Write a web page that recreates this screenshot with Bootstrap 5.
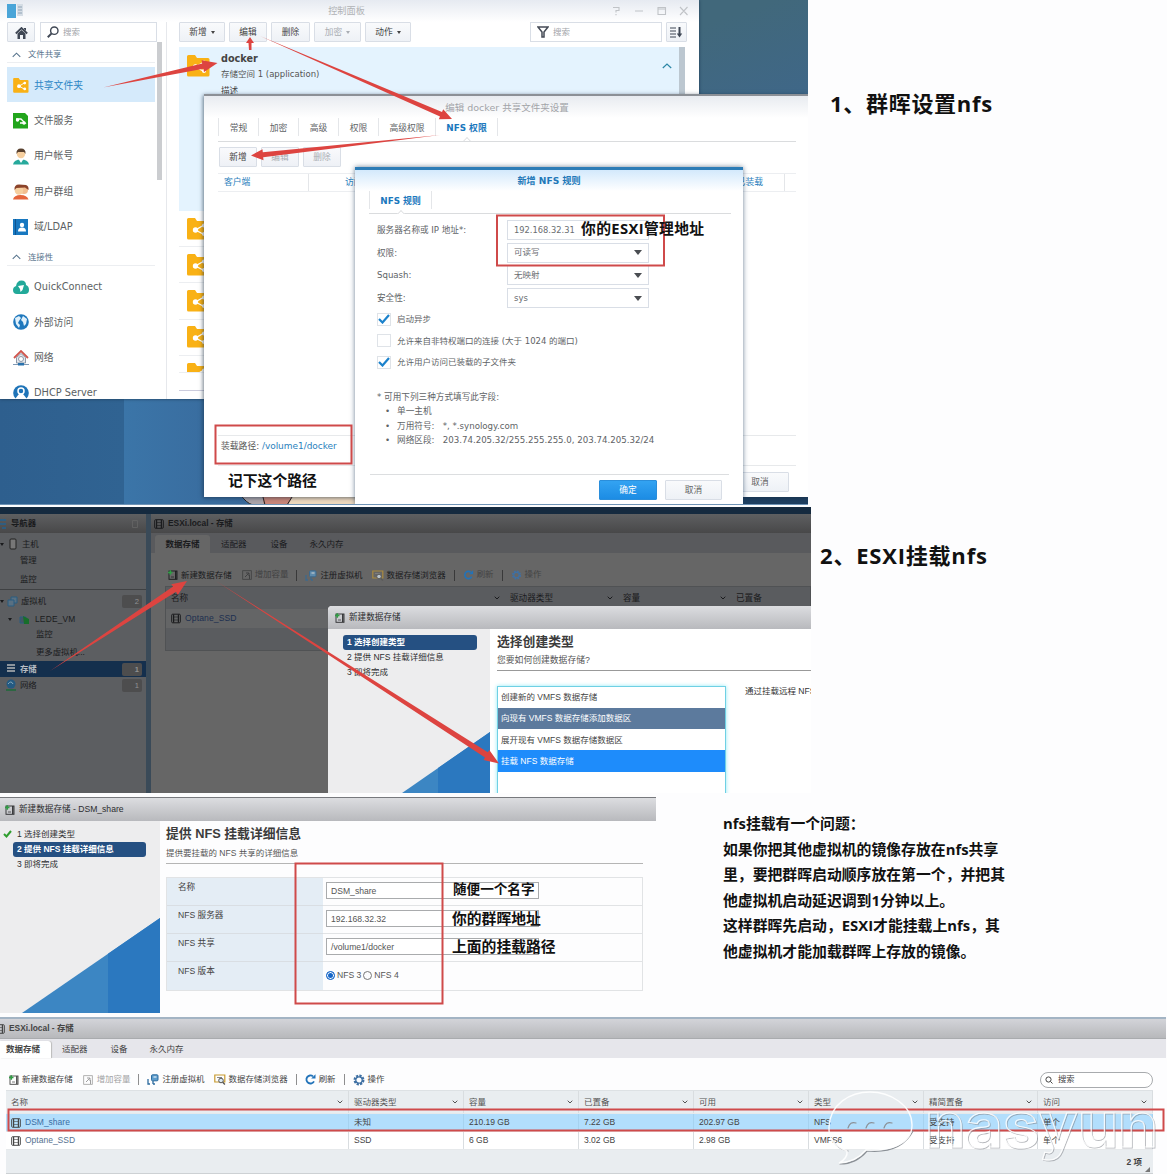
<!DOCTYPE html>
<html lang="zh-CN">
<head>
<meta charset="utf-8">
<meta name="viewport" content="width=device-width, initial-scale=1">
<title>NFS 设置</title>
<link href="https://cdn.jsdelivr.net/npm/bootstrap@5.3.0/dist/css/bootstrap.min.css" rel="stylesheet">
<script src="https://cdn.jsdelivr.net/npm/bootstrap@5.3.0/dist/js/bootstrap.bundle.min.js"></script>
<style>
body{width:1167px;height:1174px;overflow:hidden;background:#fdfdfe;line-height:1;color:#555}
svg{display:block;flex:none}
.syn{font-family:"DejaVu Sans","Noto Sans CJK SC",sans-serif;font-size:8.6px;white-space:nowrap}
.esx{font-family:"Liberation Sans","Noto Sans CJK SC",sans-serif;font-size:8.6px;white-space:nowrap}
.page{width:1167px;height:1174px}
/* section heights */
.sec-a{height:507px}.sec-b{height:290px}.sec-c{height:220px}.sec-d{height:157px}
.desk{width:808px;height:505px;overflow:hidden;background:linear-gradient(90deg,#2e5f8e 0,#306392 124px,#3b75a8 124px,#38689a 260px,#1f4264 700px,#1f3f60);flex:none}
.desk-top{left:699px;top:0;width:109px;height:95px;background:linear-gradient(160deg,#41687b 20%,#3f6788)}
.desk-line{left:0;top:504px;width:808px;height:3px;background:linear-gradient(#5f87ad,#bcd0e2)}
/* control panel */
.cp{left:0;top:0;width:699px;height:399px;background:#fff;box-shadow:0 0 3px #1d3a55;overflow:hidden}
.cp-title{height:22px;background:linear-gradient(#e6eaf1,#fff);color:#b0b2b5;font-size:9.2px;padding-left:7px}
.cp-side{width:167px;height:377px;border-right:1px solid #e6e8ec}
.sbtn{height:20px;border:1px solid #d9dee6;background:linear-gradient(#f9fafc,#eef1f6);border-radius:1px;color:#444;display:flex;align-items:center;justify-content:center;padding:1px 0 0;font-size:8.7px}
.sbtn.off{color:#a9adb3}
.sinp{height:20px;border:1px solid #d9dee6;background:#fff;display:flex;align-items:center;color:#a2a5aa;font-size:8.5px}
.grp{height:21px;color:#56738c;font-size:8.4px;border-bottom:1px solid #eceef1;margin:0 11px 0 7px;padding:5px 0 0 5px;gap:7px}
.sitem{height:35.3px;font-size:9.8px;color:#5c5f63;padding:2px 0 0 6px;gap:5px;margin-left:7px;width:148px}
.sitem.on{background:#d5eafb;color:#2b86c5}
.cp-scroll{left:157px;top:42px;width:5px;height:138px;background:#cbcdd0}
.cp-list{width:506px;margin-left:12px}
.cp-sel{height:164px;background:#e4f3fe;padding:6px 0 0 8px}
.frow{height:36.2px;border-bottom:1px solid #eceef1;padding-left:8px}
/* shared folder dialog */
.dlg{left:204px;top:94px;width:604px;height:403px;background:#fff;border-top:2px solid #8c9096;box-shadow:-1px 1px 4px rgba(20,40,60,.6)}
.dlg-title{height:22px;background:linear-gradient(#e8ebf0,#fff);color:#a2a4a8;font-size:9.5px;padding:2px 38px 0 40px}
.tabsrow{margin:0 12px 0 14px;height:24px;border-bottom:1px solid #dadcde;align-items:flex-start}
.stab{height:18px;border-right:1px solid #e4e6e9;display:flex;align-items:center;justify-content:center;font-size:8.8px;color:#606366;padding-top:2px}
.stab.on{color:#1a78bd;font-weight:700;position:relative}
.stab.on::after{content:"";position:absolute;left:50%;top:20px;width:6px;height:6px;margin-left:-3px;background:#fff;border:solid #dadcde;border-width:1px 0 0 1px;transform:rotate(45deg);clip-path:polygon(0 0,100% 0,0 100%)}
.thead-s{margin:6px 12px 0 14px;height:19px;border:solid #eceef1;border-width:1px 0;color:#2b7fbd;font-size:8.8px}
.nfs{left:355px;top:167px;width:388px;height:338px;background:#fff;border-top:3px solid #2c7cb6;box-shadow:0 0 5px rgba(30,60,90,.65)}
.nfs-title{height:21px;background:linear-gradient(#d3e9fc,#fff);color:#2278b8;font-weight:700;font-size:9.1px;padding-top:2px}
.frm{padding:6px 0 0 22px}
.frmrow{height:22.7px}
.frmrow>span{width:130px;color:#606366;padding-top:6px}
.frmrow .sinp{width:142px;padding:0 6px;color:#6a6d71;justify-content:space-between}
.tri{width:0;height:0;border:4px solid transparent;border-top:5px solid #4a4d52;border-bottom:0}
.trs{width:0;height:0;border:2.5px solid transparent;border-top:3px solid currentColor;border-bottom:0;margin-left:4px}
.chk{height:21.4px;color:#606366;gap:6px;font-size:8.5px;position:relative}
.cbox{width:14px;height:13px;border:1px solid #dfe3e8;display:flex;align-items:center;justify-content:center}
.hint{margin-top:20px;color:#606366;font-size:8.65px}
.hint div{height:14.3px}
.bul{padding-left:8px}
.bul::before{content:"•";margin-right:7px}
.okbtn{background:linear-gradient(#33a3f2,#1c8ce4);border-color:#2a8edb;color:#fff}
/* dimmed host client */
.host{width:811px;height:286px;overflow:hidden;background:#3a4a58;border-top:7px solid #152a3f;color:#1a1b1d;flex:none}
.hbar{height:19px;background:linear-gradient(#5e5f61,#484849);font-weight:700;font-size:8.4px}
.nav-h{width:146px;height:280px;background:#5c5e61}
.nrow{font-size:8.4px;padding-right:4px}
.cnt{width:20px;height:13px;background:#4d4d4e;color:#8f9092;border-radius:2px;margin-left:auto;text-align:right;padding:3px 3px 0 0;font-size:7.6px}
.pane{width:661px;height:280px;background:#666;margin-left:5px}
.tabs-h{height:20px;background:#595a5d;padding-left:4px;font-size:8.5px}
.tab-h{width:55px;height:18px;background:#666;border-radius:3px 3px 0 0;font-weight:700;align-self:flex-end}
.grid-h{margin-left:14px;height:65px;background:#5a5c5f;border:1px solid #505254}
.tools{gap:3px;font-size:8.45px}
.tools>.vsep{margin:0 5px}
.tools>.brw{margin-left:6px}
.wiz{left:328px;top:92px;width:483px;height:194px;background:#fff;border-radius:4px 0 0 0;color:#333;overflow:hidden}
.wbar{height:23px;background:linear-gradient(#dcdde0,#b8b9bd);color:#2c2d2f;font-size:8.6px}
.wside{background:#ededee;flex:none}
.step{height:15px;font-size:8.5px;padding-left:4px;border-radius:3px;color:#2d2e30}
.step.on{background:#255082;color:#fff;font-weight:700}
.wh{font-size:12.8px;font-weight:600;color:#3c3c3c}
.opt{height:21.3px;padding-left:3px;font-size:8.5px;color:#444}
.optbox{width:229px;height:120px;border:1px solid #6fd0e4;box-shadow:0 0 4px #8feaf5;margin-top:15px}
.wiz2{width:656px;height:216px;flex:none;border-top:1px solid #77797d}
.fcell{height:28px;border-bottom:1px solid #d9dee3;padding:5px 0 0 11px;font-size:8.6px;color:#444}
.vcell{height:28px;border-bottom:1px solid #e1e3e5;padding-left:3px}
.tin{width:213px;height:17px;border:1px solid #a9abad;background:#fff;padding-left:4px;display:flex;align-items:center;color:#555;font-size:8.6px}
.rad{width:9px;height:9px;border:1px solid #777;border-radius:50%;display:inline-block}
.rad.on{border:1px solid #1767c8;background:#1767c8;box-shadow:inset 0 0 0 1px #fff}
/* final datastore list */
.ds{width:1166px;border-top:2px solid #a3b4c4;background:#fdfdfe;color:#444;height:157px}
.ds-bar{height:20px;background:linear-gradient(#d3d4d9,#b7b8bb);font-weight:700;font-size:8.4px;border-bottom:1px solid #a9abae}
.ds-tabs{height:19px;background:#e6e6eb;font-size:8.5px}
.ds-tab{width:51px;height:17px;background:#fff;border-radius:0 3px 0 0;align-self:flex-end;font-weight:700;box-shadow:1px 0 1px #bbb}
.dgrid{margin-left:6px;width:1147px;background:#e9edf0;font-size:8.5px;border-top:1px solid #dde1e4;border-bottom:1px solid #cdd1d4}
.drow{display:grid;grid-template-columns:343px 115px 115px 115px 115px 115px 114px 115px;height:18px;background:#fff;border-bottom:1px solid #e6e9eb}
.drow>div{border-right:1px solid #d9dde0;display:flex;align-items:center;padding:0 5px;gap:4px}
.drow.hd{height:23px;background:#e9edf0}
.drow.hd>div{justify-content:space-between;color:#555}
.drow.pick{background:#b2defc}
.drow.pick>div{border-color:#a6d2ef}
.pill{width:113px;height:16px;border:1px solid #a8abae;border-radius:8px;background:#fff;font-size:8.3px;padding-left:4px;gap:5px;margin-left:auto;margin-right:13px}
.vsep{width:1px;height:11px;background:currentColor;opacity:.6}
/* annotations */
.ann{font-family:"Open Sans","Noto Sans CJK SC",sans-serif;font-weight:700;color:#111;white-space:nowrap;position:absolute}
.note{font-family:"Open Sans","Noto Sans CJK SC",sans-serif;font-weight:700;color:#111;white-space:nowrap}
.n1{font-size:22px;letter-spacing:.7px;padding:92px 0 0 22px}
.n2{font-size:22px;letter-spacing:.8px;padding:37px 0 0 9px}
.n3{font-size:14.85px;line-height:25.5px;padding:14px 0 0 67px}
.a1{left:228px;top:473px;font-size:14.8px}
.a2{left:581px;top:221px;font-size:14.8px;letter-spacing:.35px}
.a3{left:453px;top:882px;font-size:13.6px}
.a4{left:452px;top:911px;font-size:14.8px}
.a5{left:452px;top:939px;font-size:14.8px}
.over{left:0;top:0;pointer-events:none}
</style>
</head>
<body>
<svg width="0" height="0" class="position-absolute">
<defs>
<symbol id="fold" viewBox="0 0 23 22"><path d="M0 1.500Q0 0 1.500 0H8l2 3h11q1.500 0 1.500 1.500V20q0 1.500-1.500 1.500H1.500Q0 21.500 0 20Z" fill="#f9b115"/><path d="M17 7 8.500 12 17 16.500" stroke="#fff" stroke-width="1.300" fill="none"/><circle cx="8.500" cy="12" r="2.700" fill="#fff"/><circle cx="17" cy="7.500" r="2" fill="#fff"/><circle cx="17" cy="16" r="2" fill="#fff"/></symbol>
<symbol id="db" viewBox="0 0 10 10"><rect x=".7" y=".7" width="8.600" height="8.600" rx="1" fill="none" stroke="currentColor" stroke-width="1"/><path d="M2.600 1v8M7.400 1v8" stroke="currentColor" stroke-width="1.200"/><path d="M3 3.500h4M3 6.500h4" stroke="currentColor" stroke-width=".6"/></symbol>
<symbol id="dbn" viewBox="0 0 10 10"><rect x="1" y="1" width="8" height="8.300" fill="none" stroke="currentColor" stroke-width=".9"/><path d="M7.800 1v8" stroke="currentColor" stroke-width="1.400"/><path d="M0 2.500h4.500M2.300 .3v4.400" stroke="#2f9e44" stroke-width="1.500"/><path d="M3 7h3" stroke="currentColor" stroke-width=".7"/></symbol>
<symbol id="grow" viewBox="0 0 10 10"><rect x=".7" y=".7" width="8.600" height="8.600" fill="none" stroke="currentColor" stroke-width=".8"/><path d="M3 7l4-4M4 3h3v3M7.500 5v4" stroke="currentColor" stroke-width="1" fill="none"/></symbol>
<symbol id="reg" viewBox="0 0 12 11"><rect x="4.500" y=".8" width="6.500" height="6" rx="1" fill="#5c9ccc" stroke="#2d6b9e"/><path d="M1 5v5h2M6 10V7M8 10h-2" stroke="#2d6b9e" stroke-width="1.300" fill="none"/><path d="M6.500 3h3" stroke="#fff"/></symbol>
<symbol id="brw" viewBox="0 0 12 11"><path d="M.8 1h10v7h-10z" fill="none" stroke="#c79a2e" stroke-width="1.200"/><path d="M3 3.500h5" stroke="#888"/><circle cx="7" cy="6.500" r="2.300" fill="#dce9f3" stroke="#555"/><path d="M8.700 8.200l2.200 2.300" stroke="#555" stroke-width="1.300"/></symbol>
<symbol id="ref" viewBox="0 0 11 11"><path d="M9 7.300A4 4 0 1 1 8 2.400" fill="none" stroke="#2273b9" stroke-width="1.800"/><path d="M6.200 4.600h4.300V.3z" fill="#2273b9"/></symbol>
<symbol id="gear" viewBox="0 0 12 12"><circle cx="6" cy="6" r="4.300" fill="none" stroke="#3f70a3" stroke-width="2.300" stroke-dasharray="2.200 1.150"/><circle cx="6" cy="6" r="3.200" fill="none" stroke="#3f70a3" stroke-width="1.300"/></symbol>
<symbol id="chev" viewBox="0 0 6 4"><path d="M.7.7 3 3 5.300.7" fill="none" stroke="currentColor" stroke-width="1"/></symbol>
<symbol id="up" viewBox="0 0 10 6"><path d="M.8 5 5 1l4.200 4" fill="none" stroke="currentColor" stroke-width="1.200"/></symbol>
<symbol id="mag" viewBox="0 0 12 12"><circle cx="7.300" cy="4.700" r="3.700" fill="none" stroke="currentColor" stroke-width="1.400"/><path d="M4.600 7.400.8 11.200" stroke="currentColor" stroke-width="2"/></symbol>
</defs>
</svg>
<main class="page position-relative d-flex flex-column">

<section class="sec-a d-flex">
<div class="desk syn position-relative">
 <div class="desk-top position-absolute"></div>
 <svg class="position-absolute" style="left:238px;top:494px" width="120" height="11"><path d="M2 0Q8 9 15 11H118V0Z" fill="#eed8bd"/><path d="M2 0Q8 9 15 11H26V0Z" fill="#aaa3a8"/><path d="M24 0l2 11h24l6-11z" fill="#c98679"/><path d="M2 0Q8 9 15 11M25 3l2 8M54 3l-5 8" stroke="#222" fill="none"/></svg>
 <div class="cp position-absolute">
  <div class="cp-title d-flex align-items-center">
   <svg width="17" height="15"><path d="M0 0h9v14H0z" fill="#4aa5d8"/><path d="M10 0h6v12h-6z" fill="#d5dde5"/><path d="M11 3h4M11 6h4M11 9h4" stroke="#8fa3b5"/></svg>
   <span class="mx-auto" style="padding-left:61px">控制面板</span>
   <svg style="margin-right:11px" width="80" height="10" fill="none" stroke="#c0c3c7" stroke-width="1.100"><path d="M5 1.500h6v3H8v2M8 8v1.200M27 5h8M50 1.500h7.500v7H50zM50 3h7.500M72 1l7.500 8M79.500 1 72 9"/></svg>
  </div>
  <div class="d-flex">
   <div class="cp-side">
    <div class="d-flex" style="padding-left:7px;gap:5px">
     <div class="sbtn" style="width:28px"><svg width="13" height="12"><path d="M.8 6.500 6.500 1l5.700 5.500" fill="none" stroke="#3f4754" stroke-width="1.800"/><path d="M2.500 6.500 6.500 3l4 3.500V12H8V8H5v4H2.500z" fill="#3f4754"/><path d="M9 1h2v3L9 2z" fill="#3f4754"/></svg></div>
     <div class="sinp" style="width:117px;padding-left:6px;gap:4px"><svg width="12" height="12" color="#3f4754"><use href="#mag"/></svg>搜索</div>
    </div>
    <div class="grp d-flex align-items-center"><svg width="9" height="6"><use href="#up"/></svg>文件共享</div>
    <div style="height:4px"></div>
    <div class="sitem on d-flex align-items-center"><svg width="16" height="15"><use href="#fold"/></svg>共享文件夹</div>
    <div class="sitem d-flex align-items-center"><svg width="16" height="16"><path d="M0 0h12l3 3v12.500H0z" fill="#22a51c"/><path d="M3 6h5l4 4H7" stroke="#fff" stroke-width="1.300" fill="none"/><circle cx="4.500" cy="7" r="1.700" fill="#fff"/><circle cx="11" cy="10" r="1.700" fill="#fff"/></svg>文件服务</div>
    <div class="sitem d-flex align-items-center"><svg width="16" height="17"><path d="M0 16.500q1-5 8-5t8 5z" fill="#27a99c"/><path d="M5.500 11h5L8 15z" fill="#fff"/><circle cx="8" cy="6" r="4.200" fill="#f6cf9f"/><path d="M3.500 6Q3 .5 8 .5T12.500 6L11 4H5z" fill="#58402e"/></svg>用户帐号</div>
    <div class="sitem d-flex align-items-center"><svg width="16" height="17"><path d="M0 16.500q1-4.500 7.500-4.500t8 4.500z" fill="#e5653c"/><circle cx="11" cy="7" r="4" fill="#f2bd8f"/><circle cx="6" cy="7.500" r="4.300" fill="#f6cf9f"/><path d="M1.500 7Q1 1.500 6 1.500L13 2q3 1 2.500 5L12 4.500 3.500 5z" fill="#8b432a"/></svg>用户群组</div>
    <div class="sitem d-flex align-items-center"><svg width="16" height="16"><path d="M0 0h15v16H0z" fill="#1878c0"/><path d="M2.500 0v16" stroke="#0e5490"/><circle cx="9" cy="6" r="2.200" fill="#fff"/><path d="M5 12.500q0-4 4-4t4 4z" fill="#fff"/></svg>域/LDAP</div>
    <div class="grp d-flex align-items-center" style="height:23px"><svg width="9" height="6"><use href="#up"/></svg>连接性</div>
    <div style="height:2px"></div>
    <div class="sitem d-flex align-items-center"><svg width="16" height="15"><path d="M4 14Q0 14 0 10q0-3 3-4 1-5.500 5.500-5.500T13 5q3 1 3 5 0 4-4 4z" fill="#22a999"/><path d="M5 6l6-1-1.500 5-2 2-.5-3z" fill="#fff"/></svg>QuickConnect</div>
    <div class="sitem d-flex align-items-center"><svg width="16" height="16"><circle cx="8" cy="8" r="7.800" fill="#1f78bd"/><path d="M2 4l4-2 2 2-2 3-1 2 2 2-1 3-3-4zM10 2l4 3-1 5-2 2-1-4-2-2z" fill="#dff0fb"/></svg>外部访问</div>
    <div class="sitem d-flex align-items-center"><svg width="16" height="16"><path d="M1 8l7-7 7 7" stroke="#d0564e" stroke-width="1.800" fill="none"/><path d="M3.500 7.500 8 3.500l4.500 4V13h-9z" fill="#e6e9ee" stroke="#8b98a8"/><circle cx="8" cy="9" r="2.500" fill="#fff" stroke="#8b98a8"/><path d="M0 14.500h16" stroke="#7f99b5"/><path d="M5 13h6v2.500H5z" fill="#2a72ad"/></svg>网络</div>
    <div class="sitem d-flex align-items-center"><svg width="16" height="16"><circle cx="8" cy="8" r="7.800" fill="#1f74b8"/><circle cx="8" cy="6" r="3" fill="none" stroke="#fff" stroke-width="1.500"/><path d="M2 14l4-5h4l4 5z" fill="#fff"/></svg>DHCP Server</div>
   </div>
   <div class="cp-scroll position-absolute"></div>
   <div class="cp-list">
    <div class="d-flex" style="gap:4px;height:25px;width:508px">
     <div class="sbtn" style="width:46px">新增<i class="trs"></i></div><div class="sbtn" style="width:38px">编辑</div><div class="sbtn" style="width:39px">删除</div><div class="sbtn off" style="width:47px">加密<i class="trs"></i></div><div class="sbtn" style="width:46px">动作<i class="trs"></i></div>
     <div class="sinp ms-auto" style="width:132px;padding-left:6px;gap:4px"><svg width="12" height="12"><path d="M1 1h10L7 6v5H5V6z" fill="none" stroke="#444a55" stroke-width="1.500"/></svg>搜索</div>
     <div class="sbtn" style="width:21px"><svg width="13" height="11"><path d="M0 1h6M0 4h6M0 7h6M0 10h6" stroke="#3f4754" stroke-width="1.200"/><path d="M9.500 0v8" stroke="#3f4754" stroke-width="2"/><path d="M6.800 6.500h5.400L9.500 10.500z" fill="#3f4754"/></svg></div>
    </div>
    <div class="cp-sel d-flex"><svg style="margin-top:2px" width="23" height="22"><use href="#fold"/></svg>
     <div style="padding:1px 0 0 11px"><b class="d-block" style="font-size:9.700px;color:#444">docker</b><div style="padding-top:6px;font-size:8.500px">存储空间 1 (application)</div><div style="padding-top:9px;color:#444">描述</div></div>
     <svg class="ms-auto" style="margin:10px 7px 0 0" width="10" height="6" color="#2b86a5"><use href="#up"/></svg><i style="width:6px;height:170px;margin-top:-6px;background:#bcc7d0"></i></div>
    <div class="frow d-flex align-items-center"><svg width="23" height="22"><use href="#fold"/></svg></div>
    <div class="frow d-flex align-items-center"><svg width="23" height="22"><use href="#fold"/></svg></div>
    <div class="frow d-flex align-items-center"><svg width="23" height="22"><use href="#fold"/></svg></div>
    <div class="frow d-flex align-items-center"><svg width="23" height="22"><use href="#fold"/></svg></div>
    <div class="frow overflow-hidden" style="height:17px;padding-top:7px"><svg width="23" height="22"><use href="#fold"/></svg></div>
    <div class="frow" style="height:18px;border-color:#ccd"></div>
   </div>
  </div>
 </div>

 <div class="dlg position-absolute">
  <div class="dlg-title d-flex align-items-center justify-content-center">编辑&nbsp;<span>docker</span>&nbsp;共享文件夹设置</div>
  <div class="tabsrow d-flex">
   <div class="stab" style="width:41px;border-left:1px solid #e4e6e9">常规</div><div class="stab" style="width:40px">加密</div><div class="stab" style="width:40px">高级</div><div class="stab" style="width:40px">权限</div><div class="stab" style="width:57px">高级权限</div><div class="stab on" style="width:62px">NFS 权限</div>
  </div>
  <div class="d-flex" style="padding:5px 0 0 15px;gap:4px"><div class="sbtn" style="width:38px">新增</div><div class="sbtn off" style="width:38px">编辑</div><div class="sbtn off" style="width:38px">删除</div></div>
  <div class="thead-s d-flex align-items-center"><span style="width:91px;padding-left:6px;border-right:1px solid #e4e6e9;line-height:17px">客户端</span><span style="padding-left:36px">访问</span><span class="ms-auto" style="line-height:17px;border-right:1px solid #e4e6e9;padding-right:21px;margin-right:11px">已装载</span></div>
  <div style="height:243px"></div>
  <div class="d-flex align-items-center" style="margin:0 12px 0 14px;height:31px;border:solid #e7e9eb;border-width:1px 0;padding:0 0 9px 3px;font-size:8.800px">装载路径:&nbsp;<span style="color:#2b7fbd;font-size:9px;letter-spacing:-.05px">/volume1/docker</span></div>
  <div class="sbtn ms-auto" style="width:58px;margin:6px 19px 0 0;color:#666">取消</div>
 </div>

 <div class="nfs position-absolute">
  <div class="nfs-title d-flex align-items-center justify-content-center">新增 NFS 规则</div>
  <div class="tabsrow d-flex" style="height:23px"><div class="stab on" style="width:63px;border-left:1px solid #e4e6e9">NFS 规则</div></div>
  <div class="frm">
   <div class="frmrow d-flex align-items-start"><span>服务器名称或 IP 地址*:</span><div class="sinp" style="font-size:8.300px">192.168.32.31</div></div>
   <div class="frmrow d-flex align-items-start"><span>权限:</span><div class="sinp">可读写<i class="tri"></i></div></div>
   <div class="frmrow d-flex align-items-start"><span>Squash:</span><div class="sinp">无映射<i class="tri"></i></div></div>
   <div class="frmrow d-flex align-items-start"><span>安全性:</span><div class="sinp">sys<i class="tri"></i></div></div>
   <div style="margin-top:-2px">
   <div class="chk d-flex align-items-center"><i class="cbox"><svg width="12" height="10"><path d="M1 5l3.500 3.500L11 1" stroke="#1b82cc" stroke-width="2.200" fill="none"/></svg></i>启动异步</div>
   <div class="chk d-flex align-items-center"><i class="cbox"></i><span>允许来自非特权端口的连接 (大于 1024 的端口)</span></div>
   <div class="chk d-flex align-items-center"><i class="cbox"><svg width="12" height="10"><path d="M1 5l3.500 3.500L11 1" stroke="#1b82cc" stroke-width="2.200" fill="none"/></svg></i>允许用户访问已装载的子文件夹</div>
   </div>
   <div class="hint"><div>* 可用下列三种方式填写此字段:</div><div class="bul">单一主机</div><div class="bul">万用符号:&nbsp; &nbsp;*, *.synology.com</div><div class="bul">网络区段:&nbsp; &nbsp;203.74.205.32/255.255.255.0, 203.74.205.32/24</div></div>
  </div>
  <div class="d-flex justify-content-end" style="margin:24px 14px 0 15px;border-top:1px solid #dcdee0;padding:5px 7px 0 0;gap:8px"><div class="sbtn okbtn" style="width:58px">确定</div><div class="sbtn" style="width:57px;color:#666">取消</div></div>
 </div>
 <div class="desk-line position-absolute"></div>
</div>
<div class="note n1">1、群晖设置nfs</div>
</section>

<section class="sec-b d-flex">
<div class="host esx position-relative d-flex">
 <div class="nav-h flex-shrink-0">
  <div class="hbar d-flex align-items-center" style="gap:4px"><svg width="7" height="10"><path d="M0 1h6M0 5h6M2 9h4" stroke="#24628f" stroke-width="1.500"/></svg>导航器<svg class="ms-auto me-2" width="6" height="8"><path d="M.5.5h5v7h-5z" fill="none" stroke="#666" stroke-width=".8"/></svg></div>
  <div class="nrow d-flex align-items-center" style="height:22px;gap:5px"><i class="trs m-0" style="margin-top:1px"></i><svg width="8" height="12"><rect x="1" y="1" width="6" height="10" rx="1" fill="#777" stroke="#222"/></svg>主机</div>
  <div class="nrow" style="height:18px;padding:1px 0 0 20px">管理</div>
  <div class="nrow" style="height:17px;padding:2px 0 0 20px;border-bottom:1px solid #3f4143">监控</div>
  <div class="nrow d-flex align-items-center" style="height:22px;gap:3px"><i class="trs m-0"></i><svg width="11" height="11"><path d="M1 4h6v6H1zM4 4V1h6v6H7" stroke="#2b5c80" fill="#597082"/></svg>虚拟机<span class="cnt">2</span></div>
  <div class="nrow d-flex align-items-center" style="height:14px;gap:7px;padding-left:8px"><i class="trs m-0"></i><svg width="11" height="11"><path d="M1 3h6v6H1z" stroke="#2b5c80" fill="#456"/><path d="M4 2l6 3v5H5z" fill="#176e2b"/></svg><span style="margin-left:-2px;letter-spacing:.2px">LEDE_VM</span></div>
  <div class="nrow" style="height:17px;padding:4px 0 0 36px">监控</div>
  <div class="nrow" style="height:18px;padding:5px 0 0 36px">更多虚拟机...</div>
  <div class="nrow d-flex align-items-center" style="height:16px;gap:5px;padding-left:7px;background:#142f4d;color:#b8bdc3;font-weight:700"><svg width="8" height="10"><path d="M0 1h8M0 4h8M0 7h8" stroke="#8c949c" stroke-width="2"/></svg>存储<span class="cnt">1</span></div>
  <div class="nrow d-flex align-items-center" style="height:16px;gap:3px;padding-left:5px"><svg width="12" height="12"><circle cx="6" cy="5" r="4.500" fill="#245a82"/><path d="M3 5q3-4 5 0" stroke="#8ab" fill="none"/><path d="M1 11h10" stroke="#1d6b38" stroke-width="1.500"/></svg>网络<span class="cnt">1</span></div>
 </div>
 <div class="pane">
  <div class="hbar d-flex align-items-center" style="padding-left:3px;gap:4px"><svg width="10" height="10"><use href="#db"/></svg><span>ESXi.local - 存储</span></div>
  <div class="tabs-h d-flex align-items-center"><div class="tab-h d-flex align-items-center justify-content-center">数据存储</div><span style="padding:2px 0 0 11px">适配器</span><span style="padding:2px 0 0 24px">设备</span><span style="padding:2px 0 0 22px">永久内存</span></div>
  <div class="tools d-flex align-items-center" style="height:33px;padding:11px 0 0 17px"><svg width="10" height="10"><use href="#dbn"/></svg>新建数据存储<span class="d-flex opacity-50" style="gap:3px;margin-left:7px"><svg width="10" height="10"><use href="#grow"/></svg>增加容量</span><i class="vsep"></i><svg width="12" height="11" opacity=".7"><use href="#reg"/></svg>注册虚拟机<svg width="12" height="11" class="brw" opacity=".7"><use href="#brw"/></svg>数据存储浏览器<i class="vsep"></i><span class="d-flex" style="gap:3px;color:#444"><svg width="11" height="10"><use href="#ref"/></svg>刷新</span><i class="vsep"></i><span class="d-flex" style="gap:3px;color:#444"><svg width="11" height="10"><use href="#gear"/></svg>操作</span></div>
  <div class="grid-h">
   <div class="d-flex align-items-center" style="height:22px;padding-left:5px"><span style="width:323px">名称</span><svg width="6" height="4"><use href="#chev"/></svg><span style="width:99px;padding-left:10px">驱动器类型</span><svg width="6" height="4" class="ms-2"><use href="#chev"/></svg><span style="width:99px;padding-left:10px">容量</span><svg width="6" height="4" class="ms-2"><use href="#chev"/></svg><span style="padding-left:10px">已置备</span></div>
   <div class="d-flex align-items-center" style="height:19px;padding-left:5px;gap:4px;background:#646566"><svg width="10" height="11"><use href="#db"/></svg><span style="color:#1c2f50;letter-spacing:.1px">Optane_SSD</span></div>
  </div>
 </div>
 <div class="wiz position-absolute">
  <div class="wbar d-flex align-items-center" style="padding-left:7px;gap:4px"><svg width="10" height="10"><use href="#dbn"/></svg>新建数据存储</div>
  <div class="d-flex" style="height:171px">
   <div class="wside position-relative" style="width:162px;padding:6px 13px 0 15px">
    <div class="step on d-flex align-items-center">1 选择创建类型</div><div class="step d-flex align-items-center">2 提供 NFS 挂载详细信息</div><div class="step d-flex align-items-center">3 即将完成</div>
    <svg class="position-absolute" style="right:0;bottom:0" width="98" height="68"><path d="M0 68 98 0V68Z" fill="#3c86c3"/><path d="M46 36 98 0V68H46Z" fill="#2b78bf"/></svg>
   </div>
   <div class="flex-grow-1" style="padding:7px 0 0 7px">
    <div class="wh">选择创建类型</div>
    <div style="padding:7px 0 5px;border-bottom:1px solid #999;color:#555;font-size:8.800px">您要如何创建数据存储?</div>
    <div class="d-flex"><div class="optbox"><div class="opt d-flex align-items-center">创建新的 VMFS 数据存储</div><div class="opt d-flex align-items-center" style="background:#5c7a9d;color:#fff">向现有 VMFS 数据存储添加数据区</div><div class="opt d-flex align-items-center">展开现有 VMFS 数据存储数据区</div><div class="opt d-flex align-items-center" style="background:#1e8cfb;color:#fff">挂载 NFS 数据存储</div></div><span style="padding:16px 0 0 19px;font-size:8.500px">通过挂载远程 NFS</span></div>
   </div>
  </div>
 </div>
</div>
<div class="note n2">2、ESXI挂载nfs</div>
</section>

<section class="sec-c d-flex">
<div class="wiz2 esx">
 <div class="wbar d-flex align-items-center" style="padding-left:5px;gap:4px"><svg width="10" height="10"><use href="#dbn"/></svg><span>新建数据存储 - DSM_share</span></div>
 <div class="d-flex" style="height:192px">
  <div class="wside position-relative" style="width:160px;padding:6px 14px 0 13px">
   <svg class="position-absolute" style="left:3px;top:9px" width="9" height="8"><path d="M1 4l2.500 2.500L8 1" stroke="#2f9e2f" stroke-width="2" fill="none"/></svg>
   <div class="step d-flex align-items-center">1 选择创建类型</div><div class="step on d-flex align-items-center">2 提供 NFS 挂载详细信息</div><div class="step d-flex align-items-center">3 即将完成</div>
   <svg class="position-absolute" style="right:0;bottom:0" width="138" height="95"><path d="M0 95 138 0V95Z" fill="#3c86c3"/><path d="M86 35.800 138 0V95H86Z" fill="#2b78bf"/></svg>
  </div>
  <div class="flex-grow-1" style="padding:7px 13px 0 6px">
   <div class="wh">提供 NFS 挂载详细信息</div>
   <div style="padding:8px 0 6px;border-bottom:1px solid #b5b5b5;color:#555;font-size:8.500px">提供要挂载的 NFS 共享的详细信息</div>
   <div class="d-flex" style="margin-top:13px;border:1px solid #e1e3e5">
    <div style="width:156px;background:#e4edf5"><div class="fcell">名称</div><div class="fcell">NFS 服务器</div><div class="fcell">NFS 共享</div><div class="fcell border-0">NFS 版本</div></div>
    <div class="flex-grow-1"><div class="vcell" style="padding-top:4px"><div class="tin">DSM_share</div></div><div class="vcell" style="padding-top:4px"><div class="tin">192.168.32.32</div></div><div class="vcell" style="padding-top:4px"><div class="tin">/volume1/docker</div></div><div class="vcell d-flex align-items-center border-0" style="gap:2px;height:26px"><i class="rad on"></i>NFS 3<i class="rad"></i>NFS 4</div></div>
   </div>
  </div>
 </div>
</div>
<div class="note n3">nfs挂载有一个问题：<br>如果你把其他虚拟机的镜像存放在nfs共享<br>里，要把群晖启动顺序放在第一个，并把其<br>他虚拟机启动延迟调到1分钟以上。<br>这样群晖先启动，ESXI才能挂载上nfs，其<br>他虚拟机才能加载群晖上存放的镜像。</div>
</section>

<section class="sec-d">
<div class="ds esx">
 <div class="ds-bar d-flex align-items-center" style="gap:4px"><svg width="5" height="10" viewBox="5 0 5 10"><use href="#db" width="10" height="10"/></svg><span>ESXi.local - 存储</span></div>
 <div class="ds-tabs d-flex align-items-center"><div class="ds-tab d-flex align-items-center justify-content-center" style="padding-right:5px">数据存储</div><span style="padding:2px 0 0 11px">适配器</span><span style="padding:2px 0 0 23px">设备</span><span style="padding:2px 0 0 22px">永久内存</span></div>
 <div class="tools d-flex align-items-center" style="height:32px;padding:11px 0 0 9px"><svg width="10" height="10"><use href="#dbn"/></svg>新建数据存储<span class="d-flex opacity-50" style="gap:4px;margin-left:7px"><svg width="10" height="10"><use href="#grow"/></svg>增加容量</span><i class="vsep"></i><svg width="12" height="11"><use href="#reg"/></svg>注册虚拟机<svg width="12" height="11" class="brw"><use href="#brw"/></svg>数据存储浏览器<i class="vsep"></i><svg width="11" height="11"><use href="#ref"/></svg>刷新<i class="vsep"></i><svg width="12" height="12"><use href="#gear"/></svg>操作
  <div class="pill d-flex align-items-center"><svg width="8" height="8" viewBox="0 0 8 8"><circle cx="3.500" cy="3.500" r="2.600" fill="none" stroke="#444"/><path d="M5.500 5.500 7.500 7.500" stroke="#444"/></svg>搜索</div></div>
 <div class="dgrid">
  <div class="drow hd"><div>名称<svg width="6" height="4"><use href="#chev"/></svg></div><div>驱动器类型<svg width="6" height="4"><use href="#chev"/></svg></div><div>容量<svg width="6" height="4"><use href="#chev"/></svg></div><div>已置备<svg width="6" height="4"><use href="#chev"/></svg></div><div>可用<svg width="6" height="4"><use href="#chev"/></svg></div><div>类型<svg width="6" height="4"><use href="#chev"/></svg></div><div>精简置备<svg width="6" height="4"><use href="#chev"/></svg></div><div>访问<svg width="6" height="4"><use href="#chev"/></svg></div></div>
  <div class="drow pick"><div><svg width="10" height="10"><use href="#db"/></svg><span style="color:#3a6ea5">DSM_share</span></div><div>未知</div><div>210.19 GB</div><div>7.22 GB</div><div>202.97 GB</div><div>NFS</div><div>受支持</div><div>单个</div></div>
  <div class="drow"><div><svg width="10" height="10"><use href="#db"/></svg><span style="color:#55718f">Optane_SSD</span></div><div>SSD</div><div>6 GB</div><div>3.02 GB</div><div>2.98 GB</div><div>VMFS6</div><div>受支持</div><div>单个</div></div>
  <div class="d-flex justify-content-end" style="height:23px;padding:8px 3px 0 0"><b>2 项</b><svg width="5" height="5" style="margin:9px 0 0 3px"><path d="M0 5 5 0V5z" fill="#777"/></svg></div>
 </div>
</div>
</section>

<svg class="over position-absolute" width="1167" height="1174" viewBox="0 0 1167 1174">
 <g fill="none" stroke="#cf4a4a" stroke-width="2">
  <rect x="215.500" y="425.500" width="136" height="38"/>
  <rect x="497" y="215.500" width="167" height="50"/>
  <rect x="295.500" y="863.500" width="147" height="140"/>
  <rect x="8.500" y="1109.500" width="1155" height="21"/>
 </g>
 <g fill="#dd4440">
  <path d="M103 87.500 202.200 63.500 201.600 60.200 217.500 63 204 72 203.400 68.700Z"/>
  <path d="M250 37 254 43H251.500V50H249L248.500 43H246Z"/>
  <path d="M260 36 442 111.900 443.200 109.200 452 119 438.800 119.300 440 116.500Z"/>
  <path d="M440 135 262.800 152.200 262.500 149.200 251 155.500 263.500 160.200 263.200 157.200Z"/>
  <path d="M50 671 173.100 586.600 171.200 584.200 187 581 177.800 595 176 591.800Z"/>
  <path d="M216 581 487.800 752.300 489.300 750 499 763.500 483.500 760 485 757.500Z"/>
 </g>
 <g fill="none" stroke-linecap="round">
  <g stroke="#8b9096" stroke-width="1.200" transform="translate(1 1)"><path d="M839 1163Q855 1163 866 1150 900 1153 912 1130M847 1150Q838 1149 832 1140"/><path d="M847 1127q2-7 8-5M865 1127q2-7 8-5M883 1127q2-7 8-5"/></g>
  <path stroke="#fff" stroke-width="1.400" stroke-opacity=".9" d="M847 1151Q828 1144 829 1127C830 1104 850 1092 870 1092S912 1105 912 1125 889 1151 866 1150Q856 1162 839 1163 848 1158 847 1151Z"/>
 </g>
 <g font-family="Inter, sans-serif" font-weight="700" font-size="62" fill="none">
  <text x="926" y="1148" textLength="233" lengthAdjust="spacingAndGlyphs" stroke="#7b8086" stroke-opacity=".55" stroke-width="1">nasyun</text>
  <text x="925" y="1147" textLength="233" lengthAdjust="spacingAndGlyphs" stroke="#fff" stroke-opacity=".85" stroke-width="1.200">nasyun</text>
 </g>
</svg>
<div class="ann a1">记下这个路径</div>
<div class="ann a2">你的ESXI管理地址</div>
<div class="ann a3">随便一个名字</div>
<div class="ann a4">你的群晖地址</div>
<div class="ann a5">上面的挂载路径</div>
</main>
</body>
</html>
